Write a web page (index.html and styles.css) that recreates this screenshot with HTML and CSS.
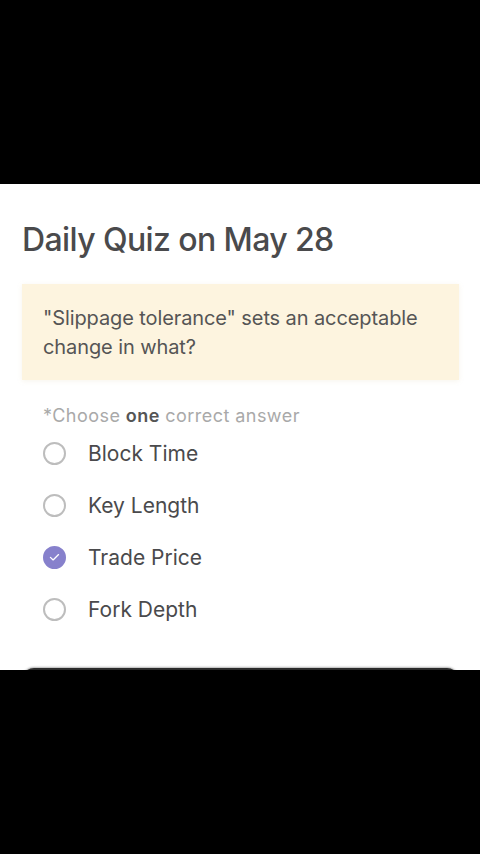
FILE: index.html
```html
<!doctype html>
<html lang="en">
  <head>
    <meta name="viewport" content="width=device-width, user-scalable=no">
    <title>Daily Quiz</title>

    <link rel="stylesheet" href="styles.css">
  </head>
  <body>
    <div id="quiz">
      <h1>Daily Quiz on May 28</h1>

      <div class="question">"Slippage tolerance" sets an acceptable change in what?</div>

      <p class="hint">*Choose <b>one</b> correct answer</p>

      <ul class="options">
        <li><span class="radio"></span>Block Time</li>
        <li><span class="radio"></span>Key Length</li>
        <li class="checked">
          <span class="radio">
            <svg viewBox="0 0 22 22" width="22" height="22"><path d="M6.3 11.4l3.1 3 6.3-6.2" fill="none" stroke="#fff" stroke-width="1.5" stroke-linecap="round" stroke-linejoin="round"/></svg>
          </span>Trade Price
        </li>
        <li><span class="radio"></span>Fork Depth</li>
      </ul>

      <button id="submit" aria-label="Submit"></button>
    </div>
  </body>
</html>
```

FILE: styles.css
```css
* { box-sizing: border-box; }

html, body {
  margin: 0;
  background: #000;
  font-family: Inter, "Noto Sans", sans-serif;
}

body {
  padding-top: 184px;
}

#quiz {
  background: #fff;
  height: 486px;
  overflow: hidden;
  padding: 38px 21px 0 22px;
}

h1 {
  margin: 0;
  font-size: 32px;
  line-height: 36px;
  font-weight: 500;
  color: #4a4a4c;
  letter-spacing: -0.6px;
}

.question {
  margin-top: 26px;
  background: #fdf4df;
  padding: 20px 21px 18px;
  font-size: 20px;
  line-height: 29px;
  color: #555;
  letter-spacing: -0.1px;
  box-shadow: 0 1px 5px rgba(200, 180, 130, 0.15);
}

.hint {
  margin: 25px 0 0 21px;
  font-size: 18px;
  line-height: 22px;
  color: #a9a9a9;
  letter-spacing: 0.45px;
}

.hint b {
  color: #555;
  font-weight: 600;
}

.options {
  list-style: none;
  margin: 0;
  padding: 0 0 0 21px;
}

.options li {
  display: flex;
  align-items: center;
  height: 52px;
  font-size: 21px;
  color: #4a4a4c;
}

.radio {
  width: 23px;
  height: 23px;
  border: 2px solid #bdbdbd;
  border-radius: 50%;
  margin-right: 22px;
  display: flex;
  align-items: center;
  justify-content: center;
}

.checked .radio {
  background: #8781cc;
  border-color: #8781cc;
}

#submit {
  display: block;
  width: 100%;
  height: 52px;
  margin-top: 33px;
  border: none;
  border-radius: 12px;
  background: #2b2b2b;
  box-shadow: 0 -1px 2px rgba(0, 0, 0, 0.3);
}
```
